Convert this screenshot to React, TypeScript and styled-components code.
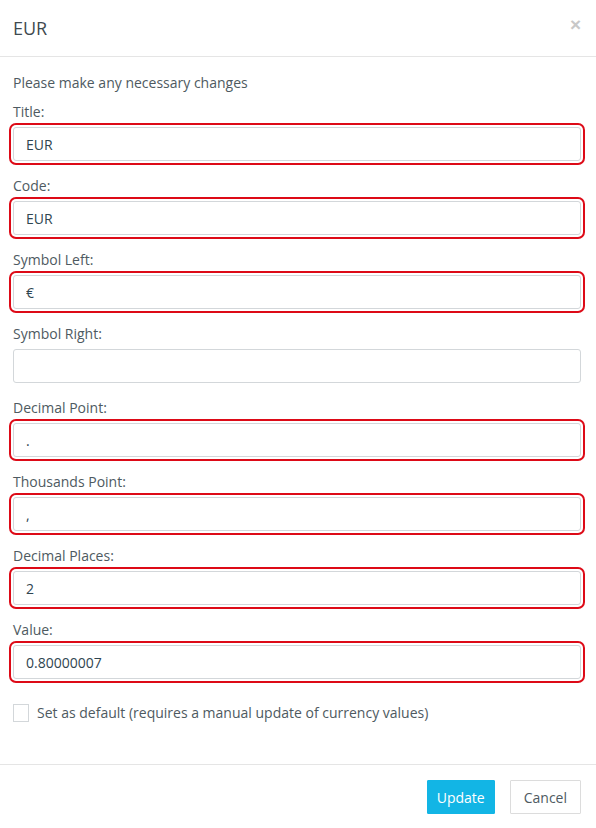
import React from "react";
import styled, { createGlobalStyle } from "styled-components";

const Global = createGlobalStyle`
  html, body { margin: 0; padding: 0; background: #fff; }
  body { font-family: "Open Sans", "Liberation Sans", sans-serif; color: #4e5a61; }
  * { box-sizing: border-box; }
`;

const Modal = styled.div`
  width: 596px;
  background: #fff;
  display: flex;
  flex-direction: column;
`;

const Header = styled.div`
  height: 57px;
  padding: 0 15px 0 13px;
  display: flex;
  align-items: center;
  justify-content: space-between;
  border-bottom: 1px solid #e5e5e5;
`;

const Title = styled.h4`
  margin: 0;
  font-size: 18px;
  font-weight: 400;
  color: #3f4a50;
`;

const Close = styled.button`
  border: none;
  background: none;
  padding: 0;
  margin-top: -8px;
  font-size: 19px;
  line-height: 1;
  color: #c8c8c8;
  font-family: "Liberation Sans", sans-serif;
  font-weight: 700;
  cursor: pointer;
`;

const Body = styled.div`
  padding: 16px 15px 15px 13px;
`;

const Intro = styled.p`
  margin: 0 0 9px;
  font-size: 14px;
  line-height: 20px;
`;

const Group = styled.div`
  display: flex;
  flex-direction: column;
  margin-bottom: 15px;
`;

const Label = styled.label`
  font-size: 14px;
  line-height: 20px;
  margin-bottom: 5px;
`;

const Input = styled.input<{ $flagged?: boolean }>`
  width: 100%;
  height: 34px;
  padding: 6px 12px;
  font-family: inherit;
  font-size: 14px;
  color: #2f4550;
  background: #fff;
  border: 1px solid #d3d7da;
  border-radius: 3px;
  outline: none;
  box-shadow: ${(p) => (p.$flagged ? "0 0 0 2px #fff, 0 0 0 4px #dd0a17" : "none")};
`;

const CheckRow = styled.label`
  display: flex;
  align-items: center;
  gap: 8px;
  margin: 24px 0 26px;
  font-size: 14px;
  line-height: 20px;
`;

const Box = styled.span`
  width: 16px;
  height: 18px;
  border: 1px solid #d3d7da;
  background: #fff;
  display: inline-block;
`;

const Footer = styled.div`
  border-top: 1px solid #e5e5e5;
  padding: 15px 15px 15px;
  display: flex;
  justify-content: flex-end;
  gap: 15px;
`;

const Button = styled.button<{ $primary?: boolean }>`
  height: 34px;
  padding: 0 ${(p) => (p.$primary ? "9px" : "13px")};
  font-family: inherit;
  font-size: 14px;
  border-radius: 1px;
  cursor: pointer;
  background: ${(p) => (p.$primary ? "#12b5e5" : "#fff")};
  color: ${(p) => (p.$primary ? "#fff" : "#4e5a61")};
  border: 1px solid ${(p) => (p.$primary ? "#12b5e5" : "#dcdcdc")};
`;

const fields: { label: string; value: string; flagged: boolean }[] = [
  { label: "Title:", value: "EUR", flagged: true },
  { label: "Code:", value: "EUR", flagged: true },
  { label: "Symbol Left:", value: "€", flagged: true },
  { label: "Symbol Right:", value: "", flagged: false },
  { label: "Decimal Point:", value: ".", flagged: true },
  { label: "Thousands Point:", value: ",", flagged: true },
  { label: "Decimal Places:", value: "2", flagged: true },
  { label: "Value:", value: "0.80000007", flagged: true },
];

export default function App() {
  return (
    <Modal>
      <Global />
      <Header>
        <Title>EUR</Title>
        <Close aria-label="Close">×</Close>
      </Header>
      <Body>
        <Intro>Please make any necessary changes</Intro>
        {fields.map((f) => (
          <Group key={f.label}>
            <Label>{f.label}</Label>
            <Input $flagged={f.flagged} defaultValue={f.value} />
          </Group>
        ))}
        <CheckRow>
          <Box />
          Set as default (requires a manual update of currency values)
        </CheckRow>
      </Body>
      <Footer>
        <Button $primary>Update</Button>
        <Button>Cancel</Button>
      </Footer>
    </Modal>
  );
}
